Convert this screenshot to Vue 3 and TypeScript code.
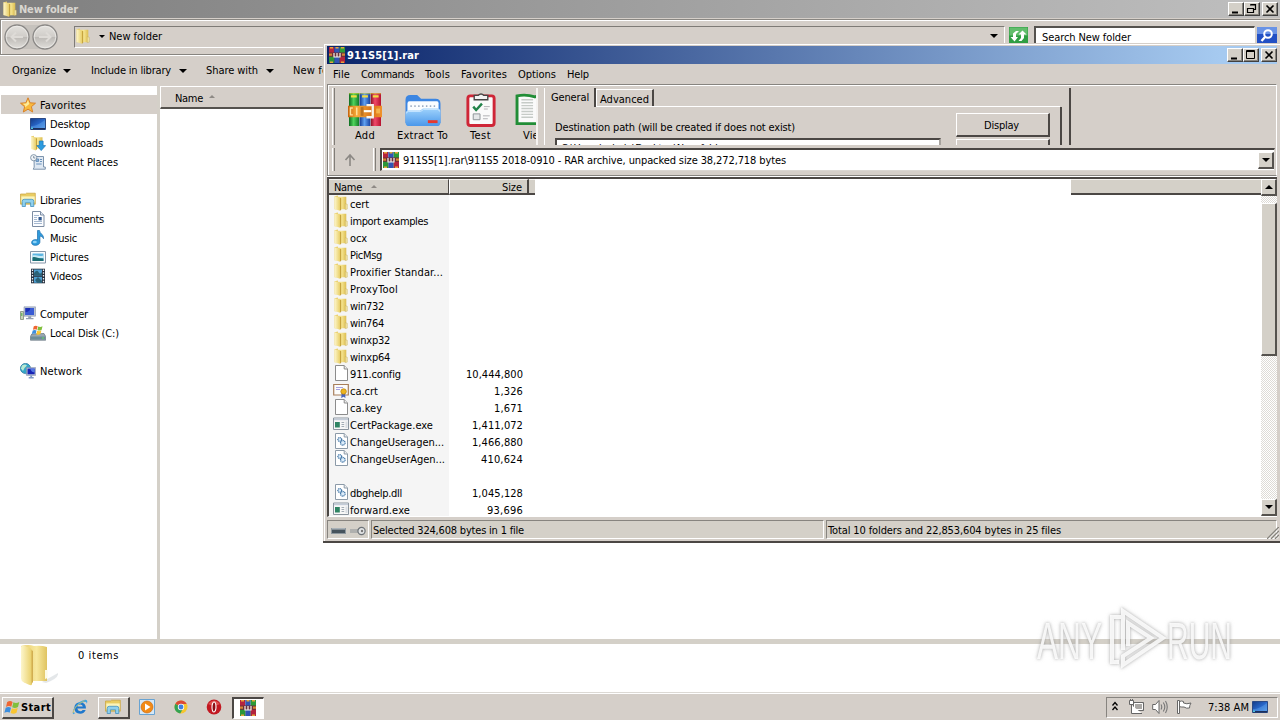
<script setup lang="ts">
interface Place { icon: string; label: string; width: number; level: number; active?: boolean }
interface Entry { icon: string; name: string; nameWidth: number; size?: string; sizeWidth?: number }

// Spreads a label's letters so that it occupies the given width in pixels.
const vFit = {
  mounted(el: HTMLElement, binding: { value: number }) {
    const count = (el.textContent ?? '').length
    const natural = el.getBoundingClientRect().width
    if (count > 0) el.style.letterSpacing = `${(binding.value + 1 - natural) / count}px`
  },
}

const groups: Place[][] = [
  [
    { icon: 'star', label: 'Favorites', width: 45, level: 0, active: true },
    { icon: 'monitor', label: 'Desktop', width: 39, level: 1 },
    { icon: 'downloads', label: 'Downloads', width: 52, level: 1 },
    { icon: 'recent', label: 'Recent Places', width: 67, level: 1 },
  ],
  [
    { icon: 'library', label: 'Libraries', width: 40, level: 0 },
    { icon: 'document', label: 'Documents', width: 53, level: 1 },
    { icon: 'music', label: 'Music', width: 26, level: 1 },
    { icon: 'picture', label: 'Pictures', width: 38, level: 1 },
    { icon: 'video', label: 'Videos', width: 31, level: 1 },
  ],
  [
    { icon: 'computer', label: 'Computer', width: 47, level: 0 },
    { icon: 'disk', label: 'Local Disk (C:)', width: 68, level: 1 },
  ],
  [{ icon: 'network', label: 'Network', width: 41, level: 0 }],
]

const menu = [
  { label: 'File', width: 16 },
  { label: 'Commands', width: 52 },
  { label: 'Tools', width: 24 },
  { label: 'Favorites', width: 45 },
  { label: 'Options', width: 37 },
  { label: 'Help', width: 21 },
]

const entries: Entry[] = [
  { icon: 'folder', name: 'cert', nameWidth: 19 },
  { icon: 'folder', name: 'import examples', nameWidth: 78 },
  { icon: 'folder', name: 'ocx', nameWidth: 17 },
  { icon: 'folder', name: 'PicMsg', nameWidth: 32 },
  { icon: 'folder', name: 'Proxifier Standar...', nameWidth: 93 },
  { icon: 'folder', name: 'ProxyTool', nameWidth: 48 },
  { icon: 'folder', name: 'win732', nameWidth: 34 },
  { icon: 'folder', name: 'win764', nameWidth: 34 },
  { icon: 'folder', name: 'winxp32', nameWidth: 40 },
  { icon: 'folder', name: 'winxp64', nameWidth: 40 },
  { icon: 'blank', name: '911.config', nameWidth: 51, size: '10,444,800', sizeWidth: 56 },
  { icon: 'cert', name: 'ca.crt', nameWidth: 28, size: '1,326', sizeWidth: 28 },
  { icon: 'blank', name: 'ca.key', nameWidth: 32, size: '1,671', sizeWidth: 28 },
  { icon: 'exe', name: 'CertPackage.exe', nameWidth: 83, size: '1,411,072', sizeWidth: 50 },
  { icon: 'dll', name: 'ChangeUseragen...', nameWidth: 94, size: '1,466,880', sizeWidth: 50 },
  { icon: 'dll', name: 'ChangeUserAgen...', nameWidth: 95, size: '410,624', sizeWidth: 41 },
  { icon: '', name: '', nameWidth: 0 },
  { icon: 'dll', name: 'dbghelp.dll', nameWidth: 52, size: '1,045,128', sizeWidth: 50 },
  { icon: 'exe', name: 'forward.exe', nameWidth: 60, size: '93,696', sizeWidth: 35 },
]
</script>

<template>
  <div class="desktop">
    <svg class="defs" width="0" height="0">
      <defs>
        <linearGradient id="gold" x1="0" x2="1"><stop offset="0" stop-color="#e3c45a" /><stop offset=".6" stop-color="#f7e693" /><stop offset="1" stop-color="#dcbd50" /></linearGradient>
        <linearGradient id="goldFront" x1="0" x2="1"><stop offset="0" stop-color="#fdf6cc" /><stop offset="1" stop-color="#e9cf68" /></linearGradient>
        <linearGradient id="blueScreen" x1="0" y1="0" x2="1" y2="1"><stop offset="0" stop-color="#143a86" /><stop offset=".5" stop-color="#2866c8" /><stop offset="1" stop-color="#64a5ea" /></linearGradient>
        <linearGradient id="skyFolder" x1="0" y1="0" x2="0" y2="1"><stop offset="0" stop-color="#9ed2fc" /><stop offset="1" stop-color="#4a97ea" /></linearGradient>
        <linearGradient id="round" x1="0" y1="0" x2="0" y2="1"><stop offset="0" stop-color="#e4e2de" /><stop offset=".48" stop-color="#d0cdc9" /><stop offset=".52" stop-color="#bdbab6" /><stop offset="1" stop-color="#e2e0dc" /></linearGradient>
        <linearGradient id="bookR" x1="0" x2="1"><stop offset="0" stop-color="#8d1022" /><stop offset=".4" stop-color="#f0486a" /><stop offset="1" stop-color="#b5122e" /></linearGradient>
        <linearGradient id="bookG" x1="0" x2="1"><stop offset="0" stop-color="#0c6b1f" /><stop offset=".45" stop-color="#4fd35c" /><stop offset="1" stop-color="#107a26" /></linearGradient>
        <linearGradient id="bookB" x1="0" x2="1"><stop offset="0" stop-color="#123b96" /><stop offset=".45" stop-color="#5fa0f0" /><stop offset="1" stop-color="#1640a0" /></linearGradient>
        <linearGradient id="strap" x1="0" x2="1"><stop offset="0" stop-color="#c7640c" /><stop offset=".25" stop-color="#f6ab3a" /><stop offset=".7" stop-color="#d9741a" /><stop offset="1" stop-color="#f0932c" /></linearGradient>
      </defs>
      <symbol id="folder" viewBox="0 0 16 16">
        <path d="M1.500 1.300 5 .5v1.300h8.300v12.400H1.500z" fill="url(#gold)" />
        <path d="M1.500 1.300 7 2.800v12.900L1.500 14z" fill="url(#goldFront)" />
        <path d="M7 2.800v12.900l1.200-1V3.200z" fill="#c6a43e" />
        <path d="M12.300 8.700 14.300 9.300v4.800l-2 .5z" fill="#f1e4a4" stroke="#c3a64c" stroke-width=".4" />
      </symbol>
      <symbol id="star" viewBox="0 0 16 16">
        <path d="m8 .8 2.100 5 5.400.4-4.100 3.500 1.300 5.300L8 12.200 3.300 15l1.300-5.300L.5 6.200l5.400-.4z" fill="#f9b93c" stroke="#d8822a" />
        <path d="m8 3 1.300 3.900L5 10.400l.3-2L2.800 6.800l3.500-.2z" fill="#fdeb9b" />
      </symbol>
      <symbol id="monitor" viewBox="0 0 16 16">
        <path d="M.5 2.500h15v11H.5z" fill="url(#blueScreen)" stroke="#2b4a86" />
        <path d="M1 10c5 0 8-2 14-6v8H1z" fill="#5ea2ea" opacity=".45" />
        <path d="M1 12h14v1.500H1z" fill="#1c2f5c" /><path d="M1 11.500h2V13H1z" fill="#4ec2d8" />
      </symbol>
      <symbol id="downloads" viewBox="0 0 16 16">
        <path d="M1 1.500 4 .8v1.400h8.500v11.500H1z" fill="url(#gold)" /><path d="M1 1.500 6 3v12.600L1 14z" fill="url(#goldFront)" /><path d="M6 3v12l1-.8V3.400z" fill="#c6a23a" />
        <path d="M9.300 6h3.800v4.600h2.500l-4.400 5-4.400-5h2.500z" fill="#2b9be0" stroke="#1b75b7" stroke-width=".7" />
      </symbol>
      <symbol id="recent" viewBox="0 0 16 16">
        <path d="M4 2.500h9.500V13h1.800v2.200H3.200l1-2z" fill="#dfe8f2" stroke="#7d94ad" />
        <path d="M6 5h2.600v2.400H6zM10 5.500h2M10 7.500h2M6.200 10h5.500" fill="#8fb4da" stroke="#5b88b6" stroke-width=".9" />
        <circle cx="3.700" cy="3.700" r="3.100" fill="#f2f5f8" stroke="#7b8fa3" stroke-width=".9" /><path d="M3.700 2v2h1.600" stroke="#546a82" fill="none" stroke-width=".7" />
      </symbol>
      <symbol id="library" viewBox="0 0 16 16">
        <path d="M.5 2h5l1-.8h8.800v11H.5z" fill="#e9cc62" stroke="#c9a23c" stroke-width=".7" /><path d="M1.300 4.400h13.400v6H1.300z" fill="#fbf3ba" />
        <path d="M2.200 14.500V9.300q0-2 2-2h7.600q2 0 2 2v5.200h-3.200v-3.700H5.400v3.700z" fill="#8fd0ee" stroke="#4491bf" stroke-width=".8" />
      </symbol>
      <symbol id="document" viewBox="0 0 16 16">
        <path d="M2.500.5h8l3.500 3.500v11.500h-11.500z" fill="#fcfdff" stroke="#7d8da3" /><path d="M10.500.5V4H14" fill="#dfe8f4" stroke="#7d8da3" />
        <path d="M4 4.500h5M4 6.500h3M4 8.500h3M4 10.500h8M4 12.500h8" stroke="#a5b8d0" /><path d="M8.500 6h3.200v3.400H8.500z" fill="#31588f" />
      </symbol>
      <symbol id="music" viewBox="0 0 16 16">
        <path d="M7.500.5h2c.2 3.500 4.600 3.800 4 8.200-.8-1.800-2-2.400-3.600-2.600V12c0 4-8 4.600-8.300.8C1.500 10 5 9 7.500 10z" fill="#2f9bdc" stroke="#1d6fae" stroke-width=".7" />
        <ellipse cx="4.800" cy="12" rx="2" ry="1.300" fill="#8ed3f8" />
      </symbol>
      <symbol id="picture" viewBox="0 0 16 16">
        <path d="M.5 2.500h15v11.500H.5z" fill="#fbfcfd" stroke="#8797a9" /><path d="M2.500 4.500h11v7.500h-11z" fill="#5cb5e2" />
        <path d="M2.500 6.500c3-1 6 1.500 11 0V9h-11z" fill="#c8eaf5" /><path d="M2.500 8.500c3-1.500 5 1.500 11 1v2.500h-11z" fill="#1c6e74" />
      </symbol>
      <symbol id="video" viewBox="0 0 16 16">
        <path d="M1 .7h14v14.600H1z" fill="#27303e" /><path d="M4 1.500h8v6H4zM4 8.700h8v6H4z" fill="#4e9fd2" /><path d="M4 5q3-4 4.500-1T12 4v3.500H4zM5 12l3-3 4 4v1.700H7z" fill="#2a6277" />
        <path d="M2.500 1.500v14M13.500 1.500v14" stroke="#eef3f8" stroke-width="1.300" stroke-dasharray="1.500 1.300" />
      </symbol>
      <symbol id="computer" viewBox="0 0 16 16">
        <path d="M.5 5.500h3v8h-3z" fill="#c9d2b8" stroke="#7d8a77" stroke-width=".8" /><path d="M1.300 7h1v3h-1z" fill="#4eae45" />
        <path d="M4 .8h11.500v9.400H4z" fill="#b9c3d4" stroke="#8794a9" stroke-width=".6" /><path d="M5.200 2H14v7H5.200z" fill="#1c2fb7" /><path d="M5.200 6c4 0 5-2 5-4H14v7H5.200z" fill="#4d7ae8" opacity=".6" />
        <path d="M8.200 10.300h3v1.700h2.300v1.300H6V12h2.200z" fill="#929db0" />
      </symbol>
      <symbol id="disk" viewBox="0 0 16 16">
        <path d="M1.800 9 14 8.500l1.700 3v3.700H.4v-3.700z" fill="#9aa7b2" stroke="#62717e" stroke-width=".7" /><path d="M.8 11.500h14.500v3H.8z" fill="#6d8c98" /><path d="M12 12.500h2v1h-2z" fill="#64e05a" />
        <g transform="translate(1.500 -.5) scale(.72)"><use href="#flagShape" width="16" height="16" /></g>
      </symbol>
      <symbol id="flagShape" viewBox="0 0 16 16">
        <path d="M3.200 2.500Q6 .8 8.600 2.400L7.300 7.300Q5 5.800 2 7.400z" fill="#ef6632" /><path d="M9.400 2.800Q12 4.200 15.300 2.600L14 7.500Q11 9.200 8.200 7.700z" fill="#80bf3c" />
        <path d="M1.700 8.300Q4.500 6.800 7 8.300L5.800 13Q3 11.700.4 13.200z" fill="#3c8ede" /><path d="M7.900 8.700Q10.500 10 13.700 8.500L12.500 13.300Q9.500 15 6.600 13.400z" fill="#f9c531" />
      </symbol>
      <symbol id="network" viewBox="0 0 16 16">
        <circle cx="5.500" cy="5.500" r="5.100" fill="#35a6c8" stroke="#1f6f95" stroke-width=".7" /><path d="M2 2.500q3-2 5 0L4.500 5 3 8 .9 5.600z" fill="#b8e9d2" /><path d="M6 6h4v3H7z" fill="#4eb866" />
        <path d="M6.500 4.600h9.200v7.800H6.500z" fill="#c5ccda" stroke="#7b86a3" stroke-width=".6" /><path d="M7.500 5.600h7.200v5.700H7.500z" fill="#1724b5" /><path d="M10 5.600h4.700v3.500q-3 1-4.700-3.500z" fill="#5377e2" />
        <path d="M10.300 12.500h1.800v1.600h1.600v1.300h-5v-1.300h1.600z" fill="#7e99c5" />
      </symbol>
      <symbol id="blank" viewBox="0 0 16 16"><path d="M2.500.5h8.700L14.500 4v11.500h-12z" fill="#fff" stroke="#8c8c8c" /><path d="M11.200.5V4h3.300" fill="#eee" stroke="#8c8c8c" /></symbol>
      <symbol id="dll" viewBox="0 0 16 16">
        <path d="M2.500.5h8.700L14.500 4v11.500h-12z" fill="#fff" stroke="#8c9aa8" /><path d="M11.200.5V4h3.300" fill="#eee" stroke="#8c9aa8" />
        <circle cx="6.800" cy="6.500" r="1.900" fill="#dcecfa" stroke="#4679a8" stroke-width="1.300" stroke-dasharray="1.100 .5" /><circle cx="9.800" cy="9.800" r="2.300" fill="#dcecfa" stroke="#4679a8" stroke-width="1.300" stroke-dasharray="1.100 .5" />
      </symbol>
      <symbol id="exe" viewBox="0 0 16 16"><path d="M.5 2h15v11.500H.5z" fill="#f7f7f7" stroke="#8a949e" /><path d="M1 2.500h14v1.700H1z" fill="#c4ccd8" /><path d="M2 6h4.800v5.500H2z" fill="#2f8463" /><path d="M8.500 6.500h2.700M8.500 8.500h2.700M8.500 10.500h2.700" stroke="#a3acb5" /><path d="M12.500 5.500h2V12h-2z" fill="#d8dde2" /></symbol>
      <symbol id="cert" viewBox="0 0 16 16"><path d="M.7 2.500h14.600v10.500H.7z" fill="#fdfdfb" stroke="#a87e5a" stroke-width="1.200" /><path d="M3 5.500h7M3 7.500h4" stroke="#a8a2e0" /><path d="m8.700 11 -.5 5 2.300-1.200 2 1.200-.5-5z" fill="#4763bd" /><circle cx="10.600" cy="9.500" r="2.800" fill="#edb41d" stroke="#a8730e" stroke-width=".6" /></symbol>
      <symbol id="rar" viewBox="0 0 16 16">
        <path d="M0 0h5.300v16H0z" fill="#b5243e" /><path d="M5.300 0h5.400v16H5.300z" fill="#3154b5" /><path d="M10.700 0H16v16h-5.300z" fill="#2d9b38" />
        <path d="M0 9h5.300v7H0z" fill="#2c963a" /><path d="M10.700 9H16v7h-5.300z" fill="#b3253f" />
        <path d="M0 5.500h16v4.300H0z" fill="#6b2e3a" /><path d="M0 6.500h3v2.300H0zM13 6.500h3v2.300h-3z" fill="#d98532" /><path d="M1 0h3v1.500H1zM6.500 0h3v1.500h-3zM12 0h3v1.500h-3zM1 14.500h3V16H1zM12 14.500h3V16h-3z" fill="#e8a53a" />
        <path d="M5 6v4h6V6M8 6v4" fill="none" stroke="#f8f3ea" stroke-width="1.200" />
      </symbol>
      <symbol id="winrar" viewBox="0 0 35 35">
        <path d="M1 0h10.500v34H1z" fill="url(#bookG)" /><path d="M12 0h11v34H12z" fill="url(#bookB)" /><path d="M23.500 0H34v34H23.500z" fill="url(#bookR)" />
        <path d="M3 3.500h6M14.500 3.500h6M25.500 3.500h6" stroke="#f2dc42" stroke-width="2.500" /><path d="M1 0h33v1.200H1z" fill="#dfd83a" opacity=".55" />
        <path d="M0 13h35v12H0z" fill="url(#strap)" /><path d="M5 15.500H2.500v7H5M9 15v8" fill="none" stroke="#ffe09a" stroke-width="1.500" />
        <path d="M19 12.500h6.500v12.500H19" fill="none" stroke="#f7f3ea" stroke-width="2.400" /><path d="M16 18.700h8" stroke="#fffef8" stroke-width="2.200" /><path d="M13 14.500h3v9h-3z" fill="#bd7321" /><path d="M29 16h4v5h-4z" fill="#f5b34b" />
      </symbol>
      <symbol id="bigFolder" viewBox="0 0 38 42">
        <path d="M22 38 38 29q1 5-12 10z" fill="#d9dde0" opacity=".7" />
        <path d="M1 2q8-2 13 0 7-1 13 1v34H5z" fill="url(#gold)" opacity=".9" /><path d="M1 3q0-2 3-1.500l6 2.500q2 1 2 3v33q0 2-3 .8L4 38.500q-3-1.500-3-4z" fill="url(#goldFront)" />
        <path d="M11.500 6v34l1.500-2V7z" fill="#d1ae51" /><path d="M25 26h2.500v8l-2.500 1z" fill="#fcfae6" />
      </symbol>
      <symbol id="ie" viewBox="0 0 16 16"><path d="M14 9.600H5.300q.5 2.600 3 2.600 1.600 0 2.300-1.200h3.100Q12.300 14.600 8.200 14.700 2.300 14.300 2.300 8.900 2.600 3.300 8.200 3.200 14 3.400 14 9.600zM5.400 7.500h5.400Q10.500 5.500 8.200 5.500 5.800 5.600 5.400 7.500z" fill="#1f78cc" /><path d="M1.200 15.200C-1 11 6 2 13 .7q3.400-.2 1.800 4Q14.600 2 12 3 5 5.400 1.800 11q-1.300 3 1.600 3z" fill="#3ba4e4" /><path d="M1 14Q2 7 12.500 1.600" fill="none" stroke="#e7c346" stroke-width=".7" /></symbol>
      <symbol id="player" viewBox="0 0 16 16"><path d="M.5.5h15v15H.5z" fill="#d5e8f7" stroke="#68a3d2" /><circle cx="8" cy="8" r="6" fill="#f28a16" stroke="#c8650a" stroke-width=".6" /><path d="M6 4.500 11.500 8 6 11.500z" fill="#fff" /></symbol>
      <symbol id="chrome" viewBox="0 0 16 16"><circle cx="8" cy="8" r="6.500" fill="#f6c62e" /><path d="M8 8 2.400 4.700A6.500 6.500 0 0 0 7.200 14.500L10.500 9z" fill="#34a253" /><path d="M8 8 2.400 4.700A6.500 6.500 0 0 1 13.700 5H8z" fill="#dc4936" /><circle cx="8" cy="8" r="3.200" fill="#f8f8f8" /><circle cx="8" cy="8" r="2.400" fill="#3f7fe0" /></symbol>
      <symbol id="opera" viewBox="0 0 16 16"><ellipse cx="8" cy="8" rx="7.300" ry="7.600" fill="#c21821" /><path d="M2 5q6-7 12 0-6 3-12 0z" fill="#ee6b66" opacity=".65" /><ellipse cx="8" cy="8" rx="2" ry="5" fill="#8d0d14" stroke="#fff" stroke-width="1.100" /></symbol>
    </svg>

    <section class="explorer">
      <header class="caption inactive">
        <svg class="i16"><use href="#folder" /></svg>
        <b class="grow"><span v-fit="58">New folder</span></b>
        <span class="cbtn"><svg viewBox="0 0 14 12"><path d="M3 9.500h6" stroke="#000" stroke-width="2" /></svg></span>
        <span class="cbtn"><svg viewBox="0 0 14 12"><path d="M5.500 1.500h5v5H9M5 2h6M2.500 5.500h6v4h-6zM2 5.500h7" fill="none" stroke="#000" stroke-width="1.200" /></svg></span>
        <span class="cbtn apart"><svg viewBox="0 0 14 12"><path d="m3.500 2.500 7 7m0-7-7 7" stroke="#000" stroke-width="1.600" /></svg></span>
      </header>
      <div class="navbar">
        <svg class="arrows" viewBox="0 0 56 28">
          <path d="M13 2h30q12 12 0 24H13Q2 14 13 2z" fill="#c6c2bd" />
          <circle cx="14" cy="14" r="12" fill="url(#round)" stroke="#8a8886" stroke-width="1.300" /><circle cx="42" cy="14" r="12" fill="url(#round)" stroke="#8a8886" stroke-width="1.300" />
          <circle cx="14" cy="14" r="10.800" fill="none" stroke="#f1efec" stroke-width=".7" /><circle cx="42" cy="14" r="10.800" fill="none" stroke="#f1efec" stroke-width=".7" />
          <path d="M20 14H9m4-4.500L8.500 14l4.500 4.500M36 14h11m-4-4.500 4.500 4.500-4.500 4.500" fill="none" stroke="#dedbd7" stroke-width="2" />
        </svg>
        <div class="path">
          <svg class="i16"><use href="#folder" /></svg>
          <i class="tri small"></i>
          <span class="grow"><span v-fit="52">New folder</span></span>
          <i class="tri"></i>
        </div>
        <svg class="refresh" viewBox="0 0 19 18"><path d="M0 0h19v18H0z" fill="#2f9e43" /><path d="M.5.5h18v8H.5z" fill="#62bd6c" /><path d="m1.500 10 4 4.500 3.500-4.500H7V7l3-3H7L4 6.500V10zM9.500 7.500l4-4 4 4H15V11l-2.500 3H9.500L12 11V7.500z" fill="#fff" /></svg>
        <div class="search"><span v-fit="88">Search New folder</span></div>
        <svg class="lens" viewBox="0 0 20 18"><path d="M0 0h20v18H0z" fill="#2250c4" /><path d="M0 0h20v7H0z" fill="#6a93e6" /><circle cx="11" cy="7" r="3.800" fill="none" stroke="#fff" stroke-width="2" /><path d="m8 10-3.500 4" stroke="#fff" stroke-width="2.400" /></svg>
      </div>
      <div class="commands">
        <span class="cmd c1"><span v-fit="43">Organize</span><i class="tri"></i></span>
        <span class="cmd c2"><span v-fit="79">Include in library</span><i class="tri"></i></span>
        <span class="cmd c3"><span v-fit="51">Share with</span><i class="tri"></i></span>
        <span class="cmd c4"><span v-fit="54">New folder</span></span>
      </div>
      <div class="body">
        <nav class="places">
          <div v-for="(group, g) in groups" :key="g" class="group">
            <div v-for="p in group" :key="p.label" class="place" :class="{ active: p.active, child: p.level === 1 }">
              <svg class="i16"><use :href="'#' + p.icon" /></svg><span v-fit="p.width">{{ p.label }}</span>
            </div>
          </div>
        </nav>
        <div class="pane"><div class="colhead"><span v-fit="27">Name</span><i class="sort"></i></div></div>
      </div>
      <footer class="details"><svg class="big"><use href="#bigFolder" /></svg><span v-fit="40">0 items</span></footer>
    </section>

    <section class="winrar">
      <header class="caption live">
        <svg class="i16"><use href="#rar" /></svg>
        <b class="grow"><span v-fit="71">911S5[1].rar</span></b>
        <span class="cbtn"><svg viewBox="0 0 14 12"><path d="M3 9.500h6" stroke="#000" stroke-width="2" /></svg></span>
        <span class="cbtn"><svg viewBox="0 0 14 12"><path d="M2.500 1.500h8v8h-8zM2 2.500h9" fill="none" stroke="#000" /></svg></span>
        <span class="cbtn apart"><svg viewBox="0 0 14 12"><path d="m3.500 2.500 7 7m0-7-7 7" stroke="#000" stroke-width="1.600" /></svg></span>
      </header>
      <div class="menubar"><span v-for="m in menu" :key="m.label" v-fit="m.width">{{ m.label }}</span></div>
      <div class="rebar">
        <div class="band">
          <i class="grip"></i>
          <div class="tools">
            <div class="tool t1"><svg class="t-ico"><use href="#winrar" /></svg><span v-fit="19">Add</span></div>
            <div class="tool t2">
              <svg class="t-ico" viewBox="0 0 38 35"><path d="M1 7q0-5 5-5h7l4 4h15q5 0 5 5v20H1z" fill="#3c86e2" /><path d="M5 8.500h28.500q1.500 0 1.500 2V25H3V11q0-2.500 2-2.500z" fill="#fbfdff" /><path d="M6 13.500h27" stroke="#9dadc2" stroke-width="1.600" stroke-dasharray="1.500 2.500" /><path d="M1 21q0-3 3-3h12l3-2h15q3 0 3 3v11q0 4-4 4H5q-4 0-4-4z" fill="url(#skyFolder)" /><path d="M2 21q0-2 2-2h12.500l3-2H34q2 0 2 2" fill="none" stroke="#c7e5ff" /><path d="M24 29.500h10" stroke="#e5392f" stroke-width="3" /></svg>
              <span v-fit="50">Extract To</span>
            </div>
            <div class="tool t3">
              <svg class="t-ico" viewBox="0 0 30 35"><rect x="1.500" y="3" width="27" height="30.500" rx="2.500" fill="#fafafa" stroke="#cf2637" stroke-width="3" /><path d="M8 2.500h4q3-3 6 0h4V7H8z" fill="#f3f3f3" stroke="#454545" stroke-width="1.400" /><path d="m7 14 3 3.500L16 11" fill="none" stroke="#22834a" stroke-width="2.500" /><path d="M18 14h6M18 16.500h4M17 23.500h7M17 26.500h5" stroke="#b0b0b4" /><path d="M7 21.500h7v6H7z" fill="#e4e7e9" stroke="#8d9499" /></svg>
              <span v-fit="20">Test</span>
            </div>
            <div class="tool t4">
              <svg class="t-ico" viewBox="0 0 40 35"><path d="M1.500 3q9-2 18.500 1 10-3 19-1v28.500h-37.500z" fill="#fafafa" stroke="#218d36" stroke-width="3" /><path d="M6 7h12M6 10h12M6 13h12M6 16h12M6 19h12M6 22h12M6 25h12" stroke="#c6cbc7" stroke-width="1.500" /></svg>
              <span v-fit="23">View</span>
            </div>
          </div>
          <i class="rule"></i>
          <div class="dialog">
            <div class="tabs"><span class="tab on"><span v-fit="37">General</span></span><span class="tab off"><span v-fit="48">Advanced</span></span></div>
            <div class="sheet">
              <div class="dest"><span v-fit="239">Destination path (will be created if does not exist)</span><div class="field"><span v-fit="165">C:\Users\admin\Desktop\New folder</span></div></div>
              <div class="buttons"><div class="push"><span v-fit="34">Display</span></div><div class="push"><span v-fit="50">New folder</span></div></div>
            </div>
          </div>
        </div>
        <div class="addr">
          <i class="grip"></i>
          <svg class="up" viewBox="0 0 12 14"><path d="M6 13V3M1.500 7 6 2l4.500 5" fill="none" stroke="#8b8884" stroke-width="1.600" /></svg>
          <i class="grip second"></i>
          <div class="combo"><svg class="i16"><use href="#rar" /></svg><span class="grow"><span v-fit="382">911S5[1].rar\911S5 2018-0910 - RAR archive, unpacked size 38,272,718 bytes</span></span><span class="sbtn"><i class="tri"></i></span></div>
        </div>
      </div>
      <div class="listbox">
        <div class="list">
          <div class="head"><div class="h name"><span v-fit="27">Name</span><i class="sort"></i></div><div class="h size"><span v-fit="19">Size</span></div><div class="h stub"></div><div class="gap"></div><div class="h tail"></div></div>
          <div class="rows">
            <div v-for="(e, i) in entries" :key="i" class="row">
              <div class="cell"><template v-if="e.name"><svg class="i16"><use :href="'#' + e.icon" /></svg><span v-fit="e.nameWidth">{{ e.name }}</span></template></div>
              <div class="num"><span v-if="e.size" v-fit="e.sizeWidth">{{ e.size }}</span></div>
            </div>
          </div>
        </div>
        <div class="scroll"><span class="sbtn"><i class="tri flip"></i></span><i class="thumb"></i><span class="sbtn"><i class="tri"></i></span></div>
      </div>
      <footer class="status">
        <div class="slot s1"><svg viewBox="0 0 40 14"><rect x="3.500" y="4.500" width="14" height="5" fill="#46535c" stroke="#8d979d" /><path d="M4 5h13" stroke="#c5cdd2" /><path d="M22 6h9M22 8h9" stroke="#8a9094" /><circle cx="33.500" cy="7" r="3.600" fill="#e2e4e5" stroke="#6d7377" stroke-width="1.200" /><circle cx="34" cy="7" r="1.200" fill="#777" /></svg></div>
        <div class="slot s2"><span v-fit="150">Selected 324,608 bytes in 1 file</span></div>
        <div class="slot s3"><span v-fit="232">Total 10 folders and 22,853,604 bytes in 25 files</span></div>
        <svg class="size-grip" viewBox="0 0 12 12"><path d="M0 12 12 0M4 12l8-8M8 12l4-4" stroke="#87847e" stroke-width="1.500" /><path d="m1.500 12 11-11M5.500 12l7-7M9.500 12l3-3" stroke="#fff" stroke-width=".8" /></svg>
      </footer>
    </section>

    <footer class="taskbar">
      <div class="start"><svg class="flag"><use href="#flagShape" /></svg><b><span v-fit="29">Start</span></b></div>
      <div class="tb"><svg class="i16"><use href="#ie" /></svg></div>
      <div class="tb raised"><svg class="i16"><use href="#library" /></svg></div>
      <div class="tb"><svg class="i16"><use href="#player" /></svg></div>
      <div class="tb"><svg class="i16"><use href="#chrome" /></svg></div>
      <div class="tb"><svg class="i16"><use href="#opera" /></svg></div>
      <div class="tb pressed"><svg class="i16"><use href="#rar" /></svg></div>
      <div class="tray">
        <svg class="chev" viewBox="0 0 8 10"><path d="m1.500 4.500 2.500-3 2.500 3m-5 4.500L4 6l2.500 3" fill="none" stroke="#000" stroke-width="1.300" /></svg>
        <svg class="t16" viewBox="0 0 16 16"><path d="M5.500 3.500h10v8h-10z" fill="#aaa8a5" stroke="#666" /><path d="M6.500 4.500h8v6h-8z" fill="none" stroke="#fff" /><path d="M1.500 1.500h4v4h-4zM2.500 0v2M4.500 0v2M3.500 6v8.500H14" fill="#fff" stroke="#666" /></svg>
        <svg class="t16" viewBox="0 0 16 16"><path d="M.7 5.500h2.800l3.500-4v13l-3.500-4H.7z" fill="#fff" stroke="#666" /><path d="M9 5.500q1.500 2.500 0 5M11.300 3.500q3 4.500 0 9M13.500 2q3.500 6 0 12" fill="none" stroke="#777" stroke-width="1.100" /></svg>
        <svg class="t16" viewBox="0 0 16 16"><path d="M1.500 1.500h2v13h-2zM3.500 2.500q2-1 4 0v1.500q3 1.500 7.500 0-1.500 2-1.500 5-3 .8-5.500-1-2 .2-4.500-.3z" fill="#fff" stroke="#666" /></svg>
        <span class="clock"><span v-fit="40">7:38 AM</span></span>
        <svg class="i16"><use href="#monitor" /></svg>
      </div>
    </footer>

    <svg class="brand" viewBox="0 0 208 76">
      <g class="brand-ink">
        <text x="4" y="59" textLength="65" lengthAdjust="spacingAndGlyphs">ANY</text>
        <text x="134" y="59" textLength="65" lengthAdjust="spacingAndGlyphs">RUN</text>
        <path d="M90 17H79v45h7" /><path d="M90 50V11l40 27-40 27v-9l28-18-23-15v23" />
      </g>
    </svg>
  </div>
</template>

<style>
html, body { margin: 0; overflow: hidden; }
</style>

<style scoped>
.desktop { --face: #d5cfc9; --warm: #d4d0c8; position: relative; width: 1280px; height: 720px; overflow: hidden; display: flex; flex-direction: column; background: #fff; color: #000; font: 11px/13px "DejaVu Sans Condensed", "DejaVu Sans", sans-serif; font-stretch: condensed; white-space: nowrap; cursor: default; }
.desktop * { box-sizing: border-box; }
.defs { position: absolute; }
.i16 { width: 16px; height: 16px; flex: none; }
.grow { flex: 1; }
svg { display: block; }
.tri { display: inline-block; width: 0; height: 0; border: 4px solid transparent; border-top-color: #000; border-bottom: 0; flex: none; }
.tri.small { border-width: 3px; border-bottom: 0; }
.tri.flip { border-top: 0; border-bottom: 4px solid #000; }
.sort { display: inline-block; border: 3px solid transparent; border-top: 0; border-bottom-color: #8e8a85; }
.explorer { display: flex; flex-direction: column; height: 692px; background: var(--face); }
.caption { display: flex; align-items: center; height: 18px; flex: none; }
.caption b { padding-left: 2px; }
.inactive { padding: 0 2px 0 2px; color: #d9d6d0; background: linear-gradient(90deg, #7f7f7f, #bfbfbf); }
.inactive b { padding-left: 1px; }
.cbtn { width: 16px; height: 14px; padding: 1px; background: var(--warm); border: 1px solid; border-color: #fff #404040 #404040 #fff; box-shadow: inset -1px -1px #87847e; }
.cbtn svg { width: 14px; height: 12px; margin: -1px 0 0 -1px; }
.cbtn.apart { margin-left: 2px; }
.navbar { display: flex; height: 36px; margin-top: 1px; padding: 6px 2px 5px 4px; border-top: 1px solid #8a8782; border-left: 1px solid #8a8782; border-bottom: 1px solid #87847f; box-shadow: inset 0 1px #fff, inset 1px 0 #fff, 0 1px #fff; }
.arrows { width: 56px; height: 28px; margin: -3px 0 0 -2px; flex: none; }
.path { display: flex; align-items: center; width: 931px; height: 22px; margin-left: 15px; padding: 0 6px 2px 0; border: 1px solid; border-color: #7e7b76 #fff #fff #7e7b76; }
.path .small { margin: 0 4px 0 8px; }
.refresh { width: 19px; height: 18px; margin: 1px 0 0 4px; }
.search { width: 221px; height: 22px; margin-left: 6px; padding: 3px 6px; background: #fff; border: solid; border-width: 2px 1px 1px 2px; border-color: #55524e #fff #fff #55524e; }
.lens { width: 20px; height: 18px; margin: 1px 0 0 2px; }
.commands { display: flex; align-items: center; height: 31px; padding-left: 12px; }
.cmd { display: flex; align-items: center; gap: 7px; flex: none; }
.c1 { width: 79px; }
.c2 { width: 115px; gap: 8px; }
.c3 { width: 87px; gap: 8px; }
.body { display: flex; height: 553px; flex: none; background: #fff; }
.places { width: 160px; padding: 9px 0 0 1px; border-right: 3px solid var(--warm); flex: none; }
.group { margin-bottom: 19px; }
.place { display: flex; align-items: center; gap: 4px; height: 19px; padding-left: 19px; }
.place span { padding-top: 2px; }
.place.child { padding-left: 29px; }
.place.active { background: var(--face); }
.pane { flex: 1; }
.colhead { display: flex; align-items: center; height: 23px; padding: 2px 0 0 14px; background: var(--face); border-bottom: 2px solid #55524e; border-top: 1px solid #fff; border-left: 1px solid #fff; }
.colhead .sort { margin: -3px 0 0 6px; }
.details { display: flex; height: 53px; padding-left: 20px; background: #fff; border-top: 5px solid var(--warm); flex: none; }
.details span { margin: 5px 0 0 20px; }
.big { width: 38px; height: 42px; }
.winrar { position: absolute; left: 323px; top: 43px; width: 957px; height: 500px; padding: 3px 3px 0 4px; display: flex; flex-direction: column; background: var(--face); border-bottom: 2px solid #4b4744; box-shadow: inset 0 1px var(--face), inset 1px 0 var(--face), inset 0 2px #fff, inset 2px 0 #fff; }
.live { padding: 0 0 0 2px; color: #fff; background: linear-gradient(90deg, #0a246a, #a6caf0 94%); }
.menubar { display: flex; gap: 11px; height: 20px; padding: 4px 0 0 6px; flex: none; }
.menubar > span { flex: none; }
.rebar { height: 92px; border: 1px solid; border-color: #87847f #fff #87847f #87847f; box-shadow: inset 0 1px #fff, inset 1px 0 #fff, 0 1px #fff; flex: none; }
.band { display: flex; height: 60px; padding: 3px 0 0 4px; overflow: hidden; }
.grip { width: 3px; border: solid; border-width: 0 1px 0 1px; border-color: transparent #817d78 transparent #fff; flex: none; }
.tools { display: flex; width: 201px; overflow: hidden; flex: none; }
.tool { display: flex; flex-direction: column; align-items: center; flex: none; padding-top: 5px; }
.t-ico { width: 36px; height: 34px; margin-bottom: 2px; }
.t1 { width: 58px; padding-left: 2px; }
.t2 { width: 58px; padding-left: 1px; }
.t2 .t-ico { width: 38px; }
.t3 { width: 58px; padding-left: 1px; }
.t3 .t-ico { width: 30px; }
.t4 { width: 46px; margin-left: 3px; }
.t4 .t-ico { width: 40px; }
.rule { width: 9px; border-left: 2px solid #f5f3f1; border-right: 1px solid #fff; flex: none; }
.dialog { width: 526px; border-right: 2px solid #4b4744; flex: none; }
.tabs { display: flex; height: 19px; }
.tab.on { width: 51px; padding: 3px 0 0 6px; border-right: 2px solid #4b4744; }
.tab.off { width: 58px; padding: 3px 0 0 3px; margin-top: 1px; border: solid; border-width: 1px 2px 1px 1px; border-color: #fff #4b4744 #fff #fff; }
.sheet { display: flex; height: 40px; width: 517px; border-right: 2px solid #4b4744; position: relative; }
.sheet::before { content: ""; position: absolute; left: 51px; right: 0; top: -1px; height: 1px; background: #fff; }
.dest { width: 411px; padding: 14px 0 0 10px; flex: none; }
.field { width: 386px; height: 20px; margin-top: 4px; padding: 2px 4px; background: #fff; border: 2px solid #4b4744; border-right-color: #a7a39e; }
.buttons { padding-top: 6px; }
.push { width: 94px; height: 24px; margin-bottom: 2px; padding: 5px 2px 0 0; text-align: center; border: solid; border-width: 1px 2px 2px 1px; border-color: #fff #4b4744 #4b4744 #fff; }
.addr { display: flex; height: 29px; padding: 3px 1px 3px 4px; }
.up { width: 12px; height: 14px; margin: 5px 0 0 9px; }
.second { margin-left: 17px; }
.combo { display: flex; align-items: center; flex: 1; margin-left: 4px; padding: 0 0 0 1px; background: #fff; border: solid; border-width: 2px 1px 1px 2px; border-color: #4b4744 #dad6d1 #dad6d1 #4b4744; }
.combo .grow { padding: 1px 0 0 4px; }
.sbtn { display: flex; align-items: center; justify-content: center; width: 16px; height: 17px; background: var(--warm); border: solid; border-width: 1px 2px 2px 1px; border-color: #fff #55524e #55524e #fff; flex: none; }
.listbox { display: flex; height: 340px; margin-top: 1px; border: solid; border-width: 2px 0 1px 2px; border-color: #4b4744 #fff #fff #4b4744; background: #fff; flex: none; }
.list { flex: 1; overflow: hidden; }
.head { display: flex; height: 16px; }
.h { display: flex; align-items: center; background: var(--warm); border-bottom: 2px solid #4b4744; border-top: 1px solid #f4f2ee; flex: none; }
.h span { padding-top: 1px; }
.h.name { width: 120px; padding-left: 5px; border-right: 1px solid #4b4744; }
.h .sort { margin: 0 0 0 9px; }
.h.size { width: 80px; justify-content: flex-end; padding-right: 5px; border-right: 2px solid #4b4744; border-left: 1px solid #fff; }
.h.stub { width: 6px; }
.gap { width: 536px; flex: none; }
.h.tail { flex: 1; }
.rows { height: 321px; overflow: hidden; }
.row { display: flex; height: 17px; }
.cell { display: flex; width: 120px; padding-left: 4px; background: #f5f5f5; overflow: hidden; }
.cell span { padding: 3px 0 0 1px; }
.num { width: 74px; padding-top: 3px; text-align: right; }
.scroll { display: flex; flex-direction: column; width: 16px; background: repeating-conic-gradient(#fff 0 25%, #dedbd6 0 50%) 0 0 / 2px 2px; flex: none; }
.thumb { height: 153px; margin: 7px 0 auto; background: var(--warm); border: solid; border-width: 1px 2px 2px 1px; border-color: #fff #55524e #55524e #fff; }
.status { display: flex; gap: 2px; height: 19px; margin-top: 3px; background: var(--warm); position: relative; flex: none; }
.slot { padding: 3px 0 0 1px; border: 1px solid; border-color: #87847f #fff #fff #87847f; }
.s1 { width: 42px; }
.s1 svg { width: 40px; height: 14px; margin-left: -1px; }
.s2 { width: 453px; }
.s3 { flex: 1; }
.size-grip { position: absolute; right: -2px; bottom: 0; width: 12px; height: 12px; }
.taskbar { display: flex; align-items: center; height: 28px; padding: 2px 2px 0 2px; background: var(--face); border-top: 1px solid #dcd9d4; box-shadow: inset 0 1px #fff; }
.start { display: flex; align-items: center; width: 52px; height: 22px; margin-right: 10px; padding-left: 1px; border: solid; border-width: 1px 2px 2px 1px; border-color: #fff #4b4744 #4b4744 #fff; }
.flag { width: 16px; height: 17px; margin-right: 1px; }
.tb { display: flex; align-items: center; justify-content: center; width: 32px; height: 22px; margin-right: 1.600px; padding-bottom: 1px; flex: none; }
.tb.raised { border: solid; border-width: 1px 2px 2px 1px; border-color: #fff #4b4744 #4b4744 #fff; }
.tb.pressed { background: #fff; border: solid; border-width: 2px 1px 1px 2px; border-color: #4b4744 #fff #fff #4b4744; }
.tray { display: flex; align-items: center; width: 172px; height: 21px; margin-left: auto; padding: 0 0 1px 4px; border: 1px solid; border-color: #87847f #fff #fff #87847f; }
.chev { width: 8px; height: 10px; margin: 0 9px 2px 0; }
.t16 { width: 16px; height: 16px; margin-right: 8px; }
.clock { width: 50px; padding-left: 7px; margin: 0 1px 0 1px; }
.brand { position: absolute; left: 1033px; top: 600px; width: 208px; height: 76px; filter: drop-shadow(0 0 1.500px #80808099) drop-shadow(0 0 2px #a0a0a055); }
.brand-ink { opacity: .85; font: 51px "Liberation Sans", sans-serif; font-stretch: normal; fill: #fff; }
.brand-ink path { fill: none; stroke: #fff; stroke-width: 4; }
</style>
